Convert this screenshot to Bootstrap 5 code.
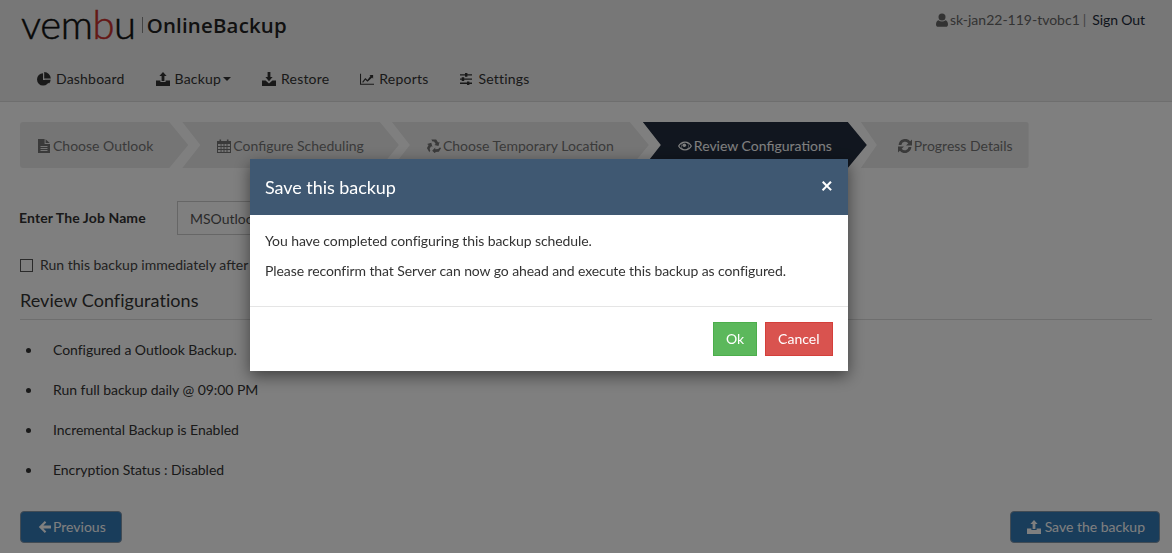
<!DOCTYPE html>
<html lang="en">
<head>
<meta charset="utf-8">
<title>Vembu OnlineBackup</title>
<link href="https://cdn.jsdelivr.net/npm/bootstrap@5.3.0/dist/css/bootstrap.min.css" rel="stylesheet">
<style>
html,body{height:553px;overflow:hidden}
body{font-family:"Lato","Liberation Sans",sans-serif;font-size:14px;color:#333;background:#fff;line-height:20px}
.ico{width:14px;height:14px;fill:currentColor;flex:none}
.top-head{background:#eee;border-bottom:1px solid #ddd;height:102px;padding:0 27px 0 21px}
.brand-row{height:57px;padding-bottom:8px}
.logo-word{font-size:40px;font-weight:300;line-height:49px;height:49px;letter-spacing:-.4px;color:#111;-webkit-text-stroke:.5px #111}
.logo-word b{color:#c9302c;font-weight:300;-webkit-text-stroke:.5px #c9302c}
.logo-sep{width:1px;height:16px;background:#888;margin:0 4px 0 6px}
.logo-prod{font-family:"Open Sans","Liberation Sans",sans-serif;font-size:20.4px;font-weight:600;color:#222;letter-spacing:.2px;line-height:24px}
.who{color:#666;margin-top:-9px;gap:0}
.who a{color:#1d2b3a;text-decoration:none;margin-left:6px;letter-spacing:-.1px}
.who .ico{margin-right:1px}
.who i{font-style:normal;color:#888;margin-left:3px}
.main-nav{padding-left:.5px;margin-top:2px}
.main-nav .nav-link{color:#333;padding:10px 15.5px;display:flex;align-items:center;gap:5px;letter-spacing:.2px}
.caret-dn{width:0;height:0;border:4px solid transparent;border-top-color:#333;border-bottom:0;margin-left:-3px}
.steps{margin:20px 0 0 20px}
.stp{height:46px;background:#ebebeb;color:#757575;padding:1px 35px 0;margin-right:-6px;display:flex;align-items:center;gap:2px;white-space:nowrap;clip-path:polygon(0 0,calc(100% - 19px) 0,100% 50%,calc(100% - 19px) 100%,0 100%,18px 50%)}
.stp.first{padding-left:17px;clip-path:polygon(0 0,calc(100% - 19px) 0,100% 50%,calc(100% - 19px) 100%,0 100%);border-radius:3px 0 0 3px}
.stp.second{margin-right:-7px}
.stp.last{padding-left:37px;padding-right:16px;margin-right:0;clip-path:polygon(0 0,100% 0,100% 100%,0 100%,16px 50%);border-radius:0 3px 3px 0}
.stp.on{background:#222d3e;color:#fff}
.job-row{margin:33px 20px 0 19px;height:34px}
.job-row label{font-weight:700;width:158px;letter-spacing:.1px}
.job-input{width:300px;height:34px;border:1px solid #ccc;border-radius:0;padding:6px 12px;font-size:14px;color:#555}
.run-row{margin:20px 20px 0;gap:7px;height:20px;color:#444}
.run-box{width:13px;height:13px;border:1px solid #555;border-radius:0;margin:0;flex:none;appearance:none;background:#fff}
.sec-title{font-size:18px;font-weight:400;color:#333;margin:14px 20px 0;padding-bottom:8px;border-bottom:1px solid #ddd;line-height:22px;letter-spacing:.05px}
.sum-list{margin:10px 20px 0;padding:0 0 0 6px;list-style:none}
.sum-list li{height:40px;display:flex;align-items:center;letter-spacing:-.04px}
.sum-list li::before{content:"";width:5px;height:5px;border-radius:50%;background:#333;margin-right:22px;flex:none}
.foot-row{margin:21px 12px 0 20px}
.act-btn{background:#337ab7;border:1px solid #8396a9;color:#fff;height:32px;padding:0 14px 0 16px;font-size:14px;border-radius:4px;display:flex;align-items:center;gap:4px}
.act-btn.back{padding:0 15px 0 17px;gap:1px}
.dlg{max-width:598px;margin:159px auto 0 250px}
.dlg .modal-content{border:0;border-radius:0;box-shadow:0 5px 15px rgba(0,0,0,.5)}
.dlg .modal-header{background:#3f5872;color:#fff;height:56px;border:0;border-radius:0;padding:0 15px}
.dlg .modal-title{font-size:18px;font-weight:400;line-height:24px;margin-top:-1px;letter-spacing:-.05px}
.x-mark{background:none;border:0;color:#fff;font-size:21px;font-weight:700;line-height:20px;padding:0;margin-top:-4px;margin-right:0}
.dlg .modal-body{padding:16px 15px 0;height:91px;color:#333;letter-spacing:-.09px}
.dlg .modal-body p{margin:0 0 10px}
.dlg .modal-footer{height:65px;padding:15px;border-top:1px solid #e5e5e5;gap:8px;align-items:flex-start}
.dlg .modal-footer .btn{margin:0;height:34px;border-radius:0;font-size:14px;line-height:32px;color:#fff}
.dlg .modal-footer .ok-btn{background:#5cb85c;border:1px solid #4cae4c;padding:0 11.5px}
.dlg .modal-footer .no-btn{background:#d9534f;border:1px solid #d43f3a;padding:0 12.5px}
</style>
</head>
<body>
<svg width="0" height="0" class="position-absolute">
<defs>
<symbol id="i-pie" viewBox="0 0 14 14"><path d="M6 1.200A6.200 6.200 0 1 0 12.400 8H6zM7.200 0v6.600h6.600A6.800 6.800 0 0 0 7.200 0z"/><path d="M7.600 7.700h6a6 6 0 0 1-1.600 3.900z"/></symbol>
<symbol id="i-up" viewBox="0 0 14 14"><path d="M7 0l3.600 4H8.400v5H5.600V4H3.400zM0 8.500h4.400V10h5.200V8.500H14V14H0zM10.600 11.300h1v1h-1zm1.500 0h1v1h-1z"/></symbol>
<symbol id="i-down" viewBox="0 0 14 14"><path d="M5.600 0h2.800v5h2.200L7 9.200 3.400 5h2.200zM0 8.500h3.600L7 11.400l3.400-2.900H14V14H0zM10.600 11.300h1v1h-1zm1.500 0h1v1h-1z"/></symbol>
<symbol id="i-chart" viewBox="0 0 16 14"><path d="M0 1h1.200v11.400H16V13.600H0z"/><path d="M2.500 10.400L6 5.800l2.500 2.200L12 3.600l-1.200-1.100H15v4.100l-1.100-1.200L8.600 10 6.100 7.900 3.500 11.200z"/></symbol>
<symbol id="i-sliders" viewBox="0 0 14 14"><path d="M1 2.200h5V1h2.400v1.200H13v1.300H8.400v1.200H6V3.500H1zM1 6.400h1.700V5.200h2.500v1.200H13v1.300H5.200v1.200H2.700V7.700H1zM1 10.600h7V9.400h2.400v1.200H13v1.300h-2.600v1.200H8v-1.200H1z"/></symbol>
<symbol id="i-file" viewBox="0 0 14 14"><path d="M1 0h6.600v5H13v9H1zM8.600.2L12.800 4H8.600z"/><path fill="#ebebeb" d="M3.500 7h7v1h-7zM3.500 9h7v1h-7zM3.500 11h7v1h-7z"/></symbol>
<symbol id="i-cal" viewBox="0 0 14 14"><path fill-rule="evenodd" d="M0 2h2.500V.5h1.600V2h5.800V.5h1.600V2H14v12H0zM1 5v2h2.600V5zm3.500 0v2h2V5zm3 0v2h2V5zm3 0v2H13V5zM1 8v2h2.600V8zm3.500 0v2h2V8zm3 0v2h2V8zm3 0v2H13V8zM1 11v2h2.600v-2zm3.500 0v2h2v-2zm3 0v2h2v-2zm3 0v2H13v-2z"/></symbol>
<symbol id="i-recycle" viewBox="0 0 14 14"><path id="rc-arm" d="M4.300.6h4.900l1.900 3 1.500-.9-1.100 4.300-4.200-1.100 1.400-.8-1.700-2.700-1.500 0z"/><use href="#rc-arm" transform="rotate(120 7 7.500)"/><use href="#rc-arm" transform="rotate(240 7 7.500)"/></symbol>
<symbol id="i-eye" viewBox="0 0 14 14"><path fill-rule="evenodd" d="M7 2.500C3.900 2.500 1.200 4.400 0 7c1.200 2.600 3.900 4.500 7 4.500s5.800-1.900 7-4.500c-1.200-2.600-3.900-4.500-7-4.500zM7 3.700A3.300 3.300 0 1 1 7 10.300 3.300 3.300 0 0 1 7 3.700zM1.300 7C2 5.900 3 5 4.200 4.400A4.300 4.300 0 0 0 4.200 9.600 6.500 6.500 0 0 1 1.300 7zM9.800 4.400C11 5 12 5.900 12.700 7 12 8.100 11 9 9.800 9.600a4.300 4.300 0 0 0 0-5.200z"/><circle cx="6.300" cy="6.200" r="1.800"/></symbol>
<symbol id="i-sync" viewBox="0 0 14 14"><path d="M14 .5v6H8L10.300 4.200A3.900 3.900 0 0 0 3.400 6H.6A6.600 6.600 0 0 1 12.200 2.300zM0 13.500v-6H6L3.700 9.800A3.900 3.900 0 0 0 10.600 8H13.400A6.600 6.600 0 0 1 1.800 11.700z"/></symbol>
<symbol id="i-user" viewBox="0 0 14 14"><circle cx="7" cy="4" r="3.500"/><path d="M3.500 7.200C4.500 8 5.700 8.400 7 8.400s2.500-.4 3.500-1.200c1.700.3 2.500 2 2.500 4.300 0 1.400-.9 2.300-2.200 2.300H3.200C1.900 13.800 1 12.900 1 11.500c0-2.300.8-4 2.500-4.300z"/></symbol>
<symbol id="i-left" viewBox="0 0 14 14"><path d="M6.800 1L8.300 2.500 5.300 5.600H13V8.400H5.300L8.300 11.500 6.800 13 .8 7z"/></symbol>
</defs>
</svg>

<header class="top-head">
  <div class="brand-row d-flex justify-content-between align-items-center">
    <div class="d-flex align-items-center">
      <span class="logo-word">vem<b>b</b>u</span>
      <span class="logo-sep"></span>
      <span class="logo-prod">OnlineBackup</span>
    </div>
    <div class="who d-flex align-items-center">
      <svg class="ico"><use href="#i-user"/></svg>sk-jan22-119-tvobc1<i>|</i><a href="#">Sign Out</a>
    </div>
  </div>
  <nav class="main-nav nav">
    <a class="nav-link" href="#"><svg class="ico"><use href="#i-pie"/></svg>Dashboard</a>
    <a class="nav-link" href="#"><svg class="ico"><use href="#i-up"/></svg>Backup<span class="caret-dn"></span></a>
    <a class="nav-link" href="#"><svg class="ico"><use href="#i-down"/></svg>Restore</a>
    <a class="nav-link" href="#"><svg class="ico"><use href="#i-chart"/></svg>Reports</a>
    <a class="nav-link" href="#"><svg class="ico"><use href="#i-sliders"/></svg>Settings</a>
  </nav>
</header>

<div class="steps d-flex">
  <div class="stp first"><svg class="ico"><use href="#i-file"/></svg>Choose Outlook</div>
  <div class="stp second"><svg class="ico"><use href="#i-cal"/></svg>Configure Scheduling</div>
  <div class="stp"><svg class="ico"><use href="#i-recycle"/></svg>Choose Temporary Location</div>
  <div class="stp on"><svg class="ico"><use href="#i-eye"/></svg>Review Configurations</div>
  <div class="stp last"><svg class="ico"><use href="#i-sync"/></svg>Progress Details</div>
</div>

<div class="job-row d-flex align-items-center">
  <label for="job">Enter The Job Name</label>
  <input id="job" class="job-input" type="text" value="MSOutlookBackup">
</div>
<div class="run-row d-flex align-items-center">
  <input class="run-box" type="checkbox" id="run">
  <label for="run">Run this backup immediately after saving</label>
</div>
<h2 class="sec-title">Review Configurations</h2>
<ul class="sum-list">
  <li>Configured a Outlook Backup.</li>
  <li>Run full backup daily @ 09:00 PM</li>
  <li>Incremental Backup is Enabled</li>
  <li>Encryption Status : Disabled</li>
</ul>
<div class="foot-row d-flex justify-content-between">
  <button class="act-btn back" type="button"><svg class="ico"><use href="#i-left"/></svg>Previous</button>
  <button class="act-btn" type="button"><svg class="ico"><use href="#i-up"/></svg>Save the backup</button>
</div>

<div class="modal-backdrop show"></div>
<div class="modal d-block" tabindex="-1">
  <div class="modal-dialog dlg">
    <div class="modal-content">
      <div class="modal-header d-flex justify-content-between">
        <h5 class="modal-title">Save this backup</h5>
        <button class="x-mark" type="button" aria-label="Close">×</button>
      </div>
      <div class="modal-body">
        <p>You have completed configuring this backup schedule.</p>
        <p>Please reconfirm that Server can now go ahead and execute this backup as configured.</p>
      </div>
      <div class="modal-footer">
        <button class="btn ok-btn" type="button">Ok</button>
        <button class="btn no-btn" type="button">Cancel</button>
      </div>
    </div>
  </div>
</div>
<script src="https://cdn.jsdelivr.net/npm/bootstrap@5.3.0/dist/js/bootstrap.bundle.min.js"></script>
</body>
</html>
